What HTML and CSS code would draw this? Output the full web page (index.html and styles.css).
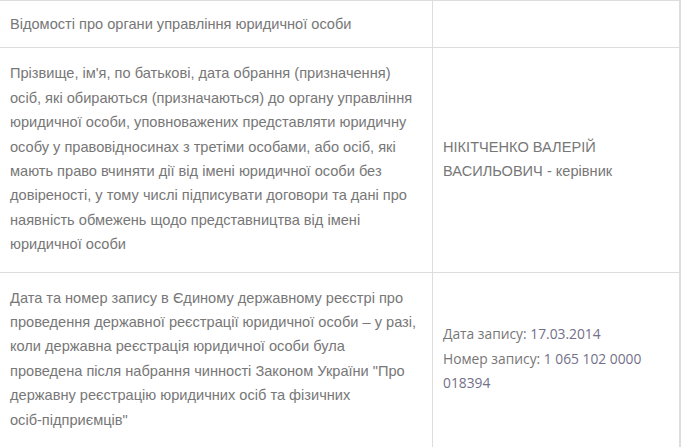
FILE: index.html
```html
<!DOCTYPE html>
<html lang="uk">
<head>
<meta charset="utf-8">
<link rel="stylesheet" href="styles.css">
</head>
<body>
<table class="info">
  <tr class="prev"><td class="label"></td><td class="value"></td></tr>
  <tr class="row-short">
    <td class="label">Відомості про органи управління юридичної особи</td>
    <td class="value"></td>
  </tr>
  <tr>
    <td class="label">Прізвище, ім'я, по батькові, дата обрання (призначення) осіб, які обираються (призначаються) до органу управління юридичної особи, уповноважених представляти юридичну особу у правовідносинах з третіми особами, або осіб, які мають право вчиняти дії від імені юридичної особи без довіреності, у тому числі підписувати договори та дані про наявність обмежень щодо представництва від імені юридичної особи</td>
    <td class="value">НІКІТЧЕНКО ВАЛЕРІЙ ВАСИЛЬОВИЧ - керівник</td>
  </tr>
  <tr>
    <td class="label">Дата та номер запису в Єдиному державному реєстрі про проведення державної реєстрації юридичної особи – у разі, коли державна реєстрація юридичної особи була<br>проведена після набрання чинності Законом України "Про державну реєстрацію юридичних осіб та фізичних <span class="nowrap">осіб-підприємців"</span></td>
    <td class="value record">Дата запису: <span class="num">17.03.2014</span><br>Номер запису: <span class="num">1 065 102 0000 018394</span></td>
  </tr>
</table>
</body>
</html>
```
FILE: styles.css
```css
html, body {
  margin: 0;
  padding: 0;
  background: #fff;
}
.info {
  border-collapse: collapse;
  width: 681px;
  margin-top: -20px;
  font-family: "Liberation Sans", Arial, sans-serif;
  font-size: 14.6px;
  line-height: 24.4px;
  color: #777;
}
.info td {
  border-top: 1px solid #ddd;
  border-bottom: 1px solid #ddd;
  vertical-align: middle;
  padding: 13px 8px 15px 10px;
}
.info td.label {
  width: 414px;
  border-right: 1px solid #ddd;
}
.info td.value {
  border-right: 2px solid #ddd;
  padding-right: 10px;
}
.info tr.prev td {
  height: 20px;
  padding: 0;
  border-top: none;
}
.info tr.row-short td {
  height: 24px;
  padding-top: 11px;
  padding-bottom: 11px;
}
.nowrap {
  white-space: nowrap;
}
.record {
  font-family: "Open Sans", "Noto Sans", sans-serif;
  font-size: 13.8px;
}
.num {
  color: #737089;
}
```
